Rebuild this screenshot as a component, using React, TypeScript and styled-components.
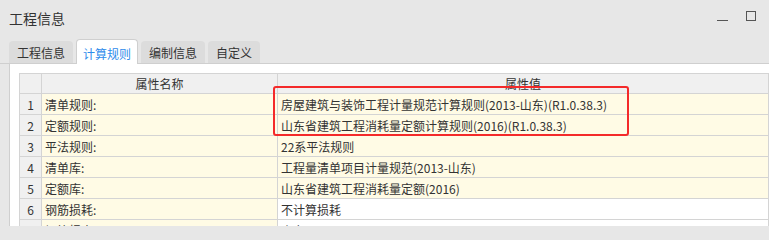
import React from "react";
import styled, { createGlobalStyle } from "styled-components";

const GlobalStyle = createGlobalStyle`
  body {
    margin: 0;
    background: #e7e7e7;
    font-family: "Noto Sans CJK SC", "Noto Sans", sans-serif;
    color: #333;
  }
`;

const Window = styled.div`
  width: 769px;
  height: 226px;
  overflow: hidden;
  background: #e7e7e7;
  display: flex;
  flex-direction: column;
`;

const TitleBar = styled.div`
  flex-shrink: 0;
  height: 36px;
  display: flex;
  align-items: center;
  justify-content: space-between;
  padding: 0 12px 0 9px;
  font-size: 14px;
  color: #333;
`;

const Controls = styled.div`
  display: flex;
  align-items: center;
  gap: 18px;
  padding-bottom: 3px;
`;

const TabStrip = styled.div`
  flex-shrink: 0;
  height: 27px;
  display: flex;
  align-items: flex-end;
  gap: 3px;
  padding-left: 9px;
  border-bottom: 1px solid #cfcfcf;
  position: relative;
  z-index: 1;
`;

const Tab = styled.div<{ $active?: boolean }>`
  height: ${(p) => (p.$active ? "25px" : "22px")};
  padding: 0 ${(p) => (p.$active ? "6px" : "7px")};
  display: flex;
  align-items: center;
  font-size: 12px;
  box-sizing: border-box;
  border-radius: 4px 4px 0 0;
  background: ${(p) => (p.$active ? "#fff" : "#dcdcdc")};
  color: ${(p) => (p.$active ? "#2f8ceb" : "#333")};
  border: 1px solid ${(p) => (p.$active ? "#cfcfcf" : "transparent")};
  border-bottom: none;
  margin-bottom: ${(p) => (p.$active ? "-1px" : "0")};
  padding-top: ${(p) => (p.$active ? "2px" : "0")};
`;

const Panel = styled.div`
  flex: 1;
  min-height: 0;
  overflow: hidden;
  margin-left: 9px;
  border-left: 1px solid #cfcfcf;
  background: #fff;
  padding: 9px 0 0 9px;
`;

const Table = styled.div`
  position: relative;
  display: grid;
  grid-template-columns: 22px 236px 1fr;
  grid-auto-rows: 21px;
  grid-template-rows: 20px;
  border-left: 1px solid #d4d4d4;
  border-top: 1px solid #d4d4d4;
  font-size: 12px;
`;

const Cell = styled.div<{ $bg: string; $align?: string }>`
  background: ${(p) => p.$bg};
  border-right: 1px solid #d4d4d4;
  border-bottom: 1px solid #d4d4d4;
  display: flex;
  align-items: center;
  justify-content: ${(p) => p.$align || "flex-start"};
  padding: 0 3px;
  white-space: nowrap;
  overflow: hidden;
  color: #333;
`;

const Highlight = styled.div`
  position: absolute;
  left: 253px;
  top: 12px;
  width: 356px;
  height: 50px;
  box-sizing: border-box;
  border: 2px solid #f42a2a;
  border-radius: 3px;
  pointer-events: none;
`;

const rows = [
  { name: "清单规则:", value: "房屋建筑与装饰工程计量规范计算规则(2013-山东)(R1.0.38.3)", white: false },
  { name: "定额规则:", value: "山东省建筑工程消耗量定额计算规则(2016)(R1.0.38.3)", white: false },
  { name: "平法规则:", value: "22系平法规则", white: false },
  { name: "清单库:", value: "工程量清单项目计量规范(2013-山东)", white: false },
  { name: "定额库:", value: "山东省建筑工程消耗量定额(2016)", white: false },
  { name: "钢筋损耗:", value: "不计算损耗", white: true },
  { name: "钢筋报表:", value: "山东", white: true },
];

const tabs = ["工程信息", "计算规则", "编制信息", "自定义"];

export default function App() {
  return (
    <>
      <GlobalStyle />
      <Window>
        <TitleBar>
          <span>工程信息</span>
          <Controls>
            <svg width="11" height="10" viewBox="0 0 11 10">
              <line x1="0" y1="8.5" x2="11" y2="8.5" stroke="#555" strokeWidth="1" />
            </svg>
            <svg width="11" height="11" viewBox="0 0 11 11">
              <rect x="0.5" y="0.5" width="9" height="9" fill="none" stroke="#555" strokeWidth="1" />
            </svg>
          </Controls>
        </TitleBar>
        <TabStrip>
          {tabs.map((t, i) => (
            <Tab key={t} $active={i === 1}>
              {t}
            </Tab>
          ))}
        </TabStrip>
        <Panel>
          <Table>
            <Cell $bg="#f0f0f0" />
            <Cell $bg="#f0f0f0" $align="center">属性名称</Cell>
            <Cell $bg="#f0f0f0" $align="center">属性值</Cell>
            {rows.map((r, i) => (
              <React.Fragment key={r.name}>
                <Cell $bg="#f0f0f0" $align="center">{i + 1}</Cell>
                <Cell $bg="#fffbe5">{r.name}</Cell>
                <Cell $bg={r.white ? "#fff" : "#fffbe5"}>{r.value}</Cell>
              </React.Fragment>
            ))}
            <Highlight />
          </Table>
        </Panel>
      </Window>
    </>
  );
}
